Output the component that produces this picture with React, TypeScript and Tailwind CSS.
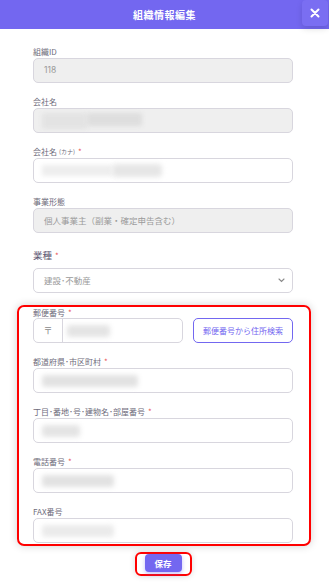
import React from "react";

const font = { fontFamily: '"Noto Sans CJK JP", "Noto Sans", sans-serif' };

function Label({ text, required, small }: { text: React.ReactNode; required?: boolean; small?: string }) {
  return (
    <div className="h-[12px] leading-[12px] text-[8px] text-[#6e6b7b] flex items-center whitespace-nowrap">
      <span>{text}</span>
      {small && <span className="text-[6px] ml-[2px]">{small}</span>}
      {required && <span className="text-[#ea5455] ml-[3px] text-[8px]">*</span>}
    </div>
  );
}

function Blur({ w, tone = "#dcdcdc" }: { w: number; tone?: string }) {
  return <div className="h-[12px] rounded-[3px] blur-[2.5px]" style={{ width: w, background: tone }} />;
}

function Input({ children, disabled }: { children?: React.ReactNode; disabled?: boolean }) {
  return (
    <div
      className={`h-[25px] rounded-[5px] border border-[#d8d6de] flex items-center px-[8px] ${disabled ? "bg-[#efefef]" : "bg-white"}`}
    >
      {children}
    </div>
  );
}

export default function App() {
  return (
    <div className="w-[329px] h-[585px] bg-white relative overflow-hidden" style={font}>
      <div className="h-[29px] bg-[#7367f0] flex items-center justify-center relative">
        <span className="text-white text-[10px] font-bold tracking-[0.5px]">組織情報編集</span>
        <div className="absolute right-[1px] top-0 w-[26px] h-[26px] bg-[#7a6ef2] rounded-[4px] shadow-[0_3px_6px_rgba(0,0,0,0.12)] flex items-center justify-center">
          <svg width="10" height="10" viewBox="0 0 10 10">
            <path d="M1.5 1.5 L8.5 8.5 M8.5 1.5 L1.5 8.5" stroke="white" strokeWidth="2" strokeLinecap="round" />
          </svg>
        </div>
      </div>

      <div className="pl-[33px] pr-[36px] pt-[17px]">
        <Label text="組織ID" />
        <Input disabled>
          <span className="text-[8.5px] text-[#9a9a9a] ml-[2px]" style={{ fontFamily: "Inter, sans-serif" }}>118</span>
        </Input>

        <div className="mt-[13px]">
          <Label text="会社名" />
          <Input disabled>
            <div className="flex">
              <div className="w-[45px] h-[16px] bg-[#e3e3e3] blur-[2px] rounded-[2px]" />
              <div className="w-[55px] h-[13px] bg-[#dedede] blur-[2px] rounded-[2px]" />
            </div>
          </Input>
        </div>

        <div className="mt-[13px]">
          <Label text="会社名" small="(カナ)" required />
          <Input>
            <div className="flex items-center">
              <div className="w-[70px] h-[11px] bg-[#eeeeee] blur-[2px]" />
              <div className="w-[50px] h-[13px] bg-[#e6e6e6] blur-[2.5px] rounded-[4px]" />
            </div>
          </Input>
        </div>

        <div className="mt-[13px]">
          <Label text="事業形態" />
          <Input disabled>
            <span className="text-[8.5px] text-[#9a9a9a] ml-[2px] whitespace-nowrap">個人事業主（副業・確定申告含む）</span>
          </Input>
        </div>

        <div className="mt-[16px]">
          <div className="h-[13px] leading-[13px] text-[9.5px] text-[#5e5873] flex items-center">
            <span>業種</span>
            <span className="text-[#ea5455] ml-[3px] text-[8px]">*</span>
          </div>
          <div className="mt-[6px] h-[25px] rounded-[5px] border border-[#d8d6de] bg-white flex items-center justify-between pl-[10px] pr-[7px]">
            <span className="text-[8.5px] text-[#9a9a9a] whitespace-nowrap">建設･不動産</span>
            <svg width="7" height="5" viewBox="0 0 7 5">
              <path d="M1 1 L3.5 3.5 L6 1" stroke="#8a8a8a" strokeWidth="1.1" fill="none" strokeLinecap="round" />
            </svg>
          </div>
        </div>

        <div className="mt-[12px] -ml-[16.5px] -mr-[17.5px] pl-[14.5px] pr-[15.5px] pb-[1px] border-2 border-[#ff0000] rounded-[7px] shadow-[0_0_8px_rgba(0,0,0,0.18)]">
          <div className="h-[11px] leading-[11px] text-[8px] text-[#6e6b7b] flex items-center">
            <span>郵便番号</span>
            <span className="text-[#ea5455] ml-[3px]">*</span>
          </div>
          <div className="flex gap-[10px]">
            <div className="w-[150px] h-[25px] rounded-[5px] border border-[#d8d6de] flex">
              <div className="w-[29px] border-r border-[#d8d6de] flex items-center justify-center text-[9px] text-[#8a8a8a]">〒</div>
              <div className="flex items-center pl-[4px]">
                <Blur w={43} tone="#e4e4e4" />
              </div>
            </div>
            <div className="flex-1 h-[25px] rounded-[5px] border border-[#7367f0] flex items-center justify-center text-[8px] text-[#7367f0] whitespace-nowrap">
              郵便番号から住所検索
            </div>
          </div>

          <div className="mt-[13px]">
            <Label text="都道府県･市区町村" required />
            <Input>
              <Blur w={96} tone="#e2e2e2" />
            </Input>
          </div>

          <div className="mt-[13px]">
            <Label text="丁目･番地･号･建物名･部屋番号" required />
            <Input>
              <Blur w={38} tone="#e4e4e4" />
            </Input>
          </div>

          <div className="mt-[13px]">
            <Label text="電話番号" required />
            <Input>
              <Blur w={72} tone="#e2e2e2" />
            </Input>
          </div>

          <div className="mt-[13px]">
            <Label text="FAX番号" />
            <Input>
              <Blur w={72} tone="#ebebeb" />
            </Input>
          </div>
        </div>

        <div className="flex justify-center mt-[6px]">
          <div className="border-2 border-[#ff0000] rounded-[6px] px-[8px] pt-0 pb-[2px] shadow-[0_0_6px_rgba(0,0,0,0.15)]">
            <div className="w-[37px] h-[18px] bg-[#7367f0] rounded-[4px] flex items-center justify-center text-white text-[8.5px] font-bold shadow-[0_2px_4px_rgba(115,103,240,0.4)]">
              保存
            </div>
          </div>
        </div>
      </div>
    </div>
  );
}
